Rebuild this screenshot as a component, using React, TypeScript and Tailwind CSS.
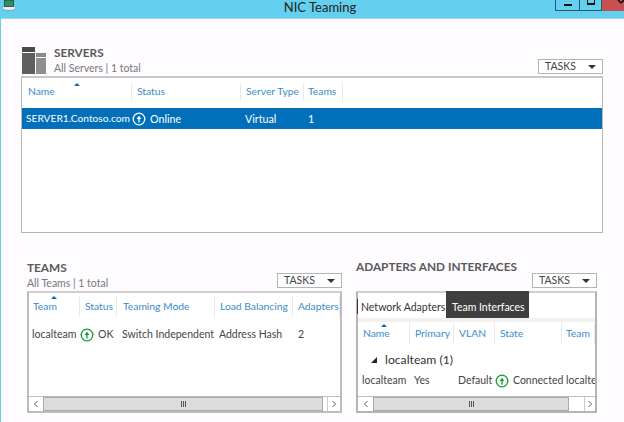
import type { ReactNode } from "react";

const font = { fontFamily: 'Lato,"Open Sans",sans-serif' };

function Up({ color }: { color: string }) {
  return (
    <svg width="14" height="14" viewBox="0 0 14 14" className="shrink-0">
      <circle cx="7" cy="7" r="5.8" fill="none" stroke={color} strokeWidth="1.3" />
      <path d="M7 10.5V6" fill="none" stroke={color} strokeWidth="1.3" />
      <path d="M4.6 7 7 3.8 9.4 7Z" fill={color} />
    </svg>
  );
}

function Tasks() {
  return (
    <div className="w-[65px] h-[15px] shrink-0 border border-[#b4b4b4] bg-white flex items-center justify-between pl-[6px] pr-[6px] text-[10.5px] text-[#444]">
      <span>TASKS</span>
      <span className="w-0 h-0 border-l-[4px] border-r-[4px] border-t-[4px] border-l-transparent border-r-transparent border-t-[#333]" />
    </div>
  );
}

function Sort({ className }: { className: string }) {
  return <span className={`absolute w-0 h-0 border-l-[3px] border-r-[3px] border-b-[3px] border-l-transparent border-r-transparent border-b-[#0a6ab4] ${className}`} />;
}

function Head({ w, pad, children }: { w: string; pad: string; children: ReactNode }) {
  return <div className={`${w} ${pad} shrink-0 h-full border-r border-[#e8e8e8] flex items-center whitespace-nowrap overflow-hidden text-[10.3px] text-[#3a8bcb]`}>{children}</div>;
}

function Scroll({ left, thumb, gap }: { left: string; thumb: string; gap: string }) {
  return (
    <div className="h-[15px] flex items-center border-t border-[#bdbdbd] bg-[#f3f3f3] shrink-0">
      <div className={`${left} h-full shrink-0 bg-white flex items-center justify-center`}>
        <svg width="6" height="8" viewBox="0 0 6 8"><path d="M4.5 1 1.5 4 4.5 7" fill="none" stroke="#666" /></svg>
      </div>
      <div className={`${thumb} h-full shrink-0 bg-[#dcdcdc] border border-[#aaa] flex items-center justify-center gap-px`}>
        <i className="w-px h-[6px] bg-[#555]" /><i className="w-px h-[6px] bg-[#555]" /><i className="w-px h-[6px] bg-[#555]" />
      </div>
      <div className={`${gap} h-full shrink-0 bg-white`} />
      <div className="flex-1 h-full bg-white flex items-center justify-center border-l border-[#ccc]">
        <svg width="6" height="8" viewBox="0 0 6 8"><path d="M1.5 1 4.5 4 1.5 7" fill="none" stroke="#666" /></svg>
      </div>
    </div>
  );
}

export default function App() {
  return (
    <div className="w-[624px] h-[422px] overflow-hidden bg-[#63d0f0] flex flex-col text-[#444]" style={font}>
      <div className="h-[18px] shrink-0 relative flex justify-center items-start pl-[16px]">
        <span className="text-[13px] text-[#222] leading-[15px]">NIC Teaming</span>
        <svg width="16" height="11" viewBox="0 0 16 11" className="absolute left-[1px] top-0">
          <ellipse cx="8" cy="8" rx="7" ry="2.6" fill="#e3edf2" stroke="#5f8a9c" strokeWidth=".6" />
          <rect x="3.5" y="0" width="9" height="6.5" fill="#2f8f58" stroke="#234" strokeWidth=".7" />
        </svg>
        <div className="absolute right-0 top-0 h-[11px] flex">
          <div className="w-[25px] h-full border border-t-0 border-[#2a5a6c] flex items-center justify-center"><i className="w-[8px] h-[2px] bg-[#111]" /></div>
          <div className="w-[22px] h-full border border-l-0 border-t-0 border-[#2a5a6c] flex items-start justify-center"><i className="w-[8px] h-[5px] border border-[#111] border-t-0 border-b-2" /></div>
          <div className="w-[22px] h-full bg-[#c75050] flex justify-end items-start overflow-hidden"><svg width="7" height="6" viewBox="0 0 7 6"><path d="M1 0 4 3M7 0 4 3" stroke="#111" strokeWidth="1.6" /></svg></div>
        </div>
      </div>

      <div className="flex-1 ml-[1px] bg-[#fefcff] border-t border-[#a9cfe4] pl-[20px] pr-[21px] flex flex-col min-h-0">
        <div className="h-[57px] shrink-0 flex items-end justify-between">
          <div className="flex items-end gap-[8px] pl-[1px] pb-[2px]">
            <svg width="24" height="27" viewBox="0 0 24 27">
              <rect x="0" y="0" width="13" height="5" fill="#4a4a4a" />
              <rect x="0" y="6" width="13" height="21" fill="#5f5f5f" />
              <rect x="14" y="6" width="10" height="4" fill="#8a8a8a" />
              <rect x="14" y="11" width="10" height="16" fill="#8f8f8f" />
            </svg>
            <div className="flex flex-col leading-none">
              <span className="text-[11.8px] font-bold text-[#5a5a5a] mb-[4px]">SERVERS</span>
              <span className="text-[10.5px] text-[#777] mb-[1px]">All Servers | 1 total</span>
            </div>
          </div>
          <div className="mb-[2px]"><Tasks /></div>
        </div>

        <div className="h-[157px] shrink-0 border border-[#b5b5b5] border-t-2 border-t-[#c8c8c8] flex flex-col bg-white">
          <div className="h-[18px] mt-[5px] mb-[7px] flex relative shrink-0">
            <Head w="w-[110px]" pad="pl-[6px]">Name</Head>
            <Sort className="left-[52px] top-0" />
            <Head w="w-[109px]" pad="pl-[5px]">Status</Head>
            <Head w="w-[63px]" pad="pl-[5px]">Server Type</Head>
            <Head w="w-[39px]" pad="pl-[4px]">Teams</Head>
          </div>
          <div className="h-[21px] pt-px bg-[#016fb9] text-white text-[10.7px] flex items-center shrink-0 whitespace-nowrap">
            <span className="w-[110px] shrink-0 pl-[4px] text-[10.2px]">SERVER1.Contoso.com</span>
            <span className="w-[109px] shrink-0 flex items-center gap-[4px]"><Up color="#fff" />Online</span>
            <span className="w-[63px] shrink-0 pl-[4px]">Virtual</span>
            <span className="pl-[4px]">1</span>
          </div>
        </div>

        <div className="flex-1 flex min-h-0 mt-[27px] mb-[9px]">
          <div className="w-[321px] shrink-0 flex flex-col pl-[6px]">
            <div className="h-[28px] flex justify-between items-end shrink-0">
              <div className="flex flex-col leading-none">
                <span className="text-[11.8px] font-bold text-[#5a5a5a] mb-[4px]">TEAMS</span>
                <span className="text-[10.5px] text-[#777]">All Teams | 1 total</span>
              </div>
              <Tasks />
            </div>
            <div className="flex-1 mt-[3px] border-2 border-[#bcbcbc] border-t-[#cfcfcf] bg-white flex flex-col min-h-0">
              <div className="h-[20px] flex relative shrink-0 mt-[4px]">
                <Head w="w-[51px]" pad="pl-[4px]">Team</Head>
                <Sort className="left-[22px] top-[-1px]" />
                <Head w="w-[37px]" pad="pl-[5px]">Status</Head>
                <Head w="w-[98px]" pad="pl-[6px]">Teaming Mode</Head>
                <Head w="w-[78px]" pad="pl-[5px]">Load Balancing</Head>
                <Head w="w-[47px]" pad="pl-[5px]">Adapters</Head>
              </div>
              <div className="h-[20px] mt-[8px] flex items-center text-[10.5px] text-[#444] whitespace-nowrap">
                <span className="w-[51px] pl-[3px] shrink-0">localteam</span>
                <span className="w-[37px] shrink-0 flex items-center gap-[4px]"><Up color="#159a30" />OK</span>
                <span className="w-[98px] shrink-0 pl-[5px]">Switch Independent</span>
                <span className="w-[78px] shrink-0 pl-[4px]">Address Hash</span>
                <span className="pl-[5px]">2</span>
              </div>
              <div className="flex-1" />
              <Scroll left="w-[14px]" thumb="w-[280px]" gap="w-[4px]" />
            </div>
          </div>
          <div className="w-[241px] shrink-0 ml-[14px] flex flex-col">
            <div className="h-[28px] flex flex-col justify-between shrink-0">
              <span className="mt-[1px] text-[11.8px] font-bold text-[#5a5a5a] leading-none whitespace-nowrap">ADAPTERS AND INTERFACES</span>
              <div className="self-end"><Tasks /></div>
            </div>
            <div className="flex-1 mt-[3px] border-2 border-[#b4b4b4] border-t-[#cfcfcf] bg-white flex flex-col min-h-0">
              <div className="h-[29px] relative flex items-stretch shrink-0 text-[10.5px] border-b-4 border-[#f3f0f0]">
                <i className="absolute left-[-1px] top-[6px] h-[15px] w-px bg-[#333]" />
                <span className="w-[88px] flex items-center pt-[5px] pl-[3px] whitespace-nowrap text-[#333]">Network Adapters</span>
                <span className="w-[83px] -mt-[2px] bg-[#3f3f3f] text-white flex items-center pt-[7px] pl-[6px] whitespace-nowrap">Team Interfaces</span>
              </div>
              <div className="h-[22px] pt-px flex relative shrink-0">
                <Head w="w-[52px]" pad="pl-[5px]">Name</Head>
                <Sort className="left-[23px] top-[2px]" />
                <Head w="w-[44px]" pad="pl-[5px]">Primary</Head>
                <Head w="w-[41px]" pad="pl-[5px]">VLAN</Head>
                <Head w="w-[67px]" pad="pl-[5px]">State</Head>
                <Head w="w-[33px]" pad="pl-[4px]">Team</Head>
              </div>
              <div className="h-[22px] mt-[5px] flex items-center text-[12.2px] text-[#333] pl-[13px] gap-[8px] shrink-0">
                <svg width="6" height="6" viewBox="0 0 6 6"><path d="M6 0V6H0Z" fill="#222" /></svg>
                <span>localteam (1)</span>
              </div>
              <div className="h-[20px] flex items-center text-[10.5px] text-[#444] whitespace-nowrap shrink-0 overflow-hidden">
                <span className="w-[52px] pl-[4px] shrink-0">localteam</span>
                <span className="w-[44px] shrink-0 pl-[4px]">Yes</span>
                <span className="w-[41px] shrink-0 pl-[4px]">Default</span>
                <span className="w-[67px] shrink-0 flex items-center gap-[4px]"><Up color="#159a30" />Connected</span>
                <span className="pl-[4px]">localte</span>
              </div>
              <div className="flex-1" />
              <Scroll left="w-[15px]" thumb="w-[196px]" gap="w-[15px]" />
            </div>
          </div>
        </div>
      </div>
    </div>
  );
}
